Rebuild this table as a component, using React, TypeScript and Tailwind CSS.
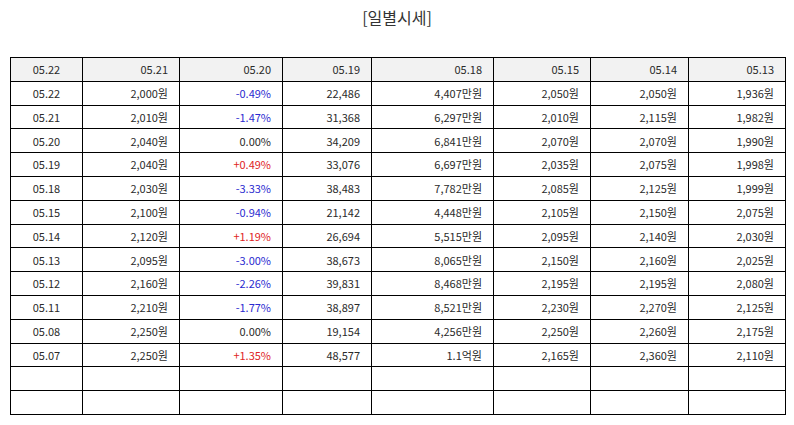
const headers = ["05.22", "05.21", "05.20", "05.19", "05.18", "05.15", "05.14", "05.13"];

type Row = [string, string, string, string, string, string, string, string];

const rows: Row[] = [
  ["05.22", "2,000원", "-0.49%", "22,486", "4,407만원", "2,050원", "2,050원", "1,936원"],
  ["05.21", "2,010원", "-1.47%", "31,368", "6,297만원", "2,010원", "2,115원", "1,982원"],
  ["05.20", "2,040원", "0.00%", "34,209", "6,841만원", "2,070원", "2,070원", "1,990원"],
  ["05.19", "2,040원", "+0.49%", "33,076", "6,697만원", "2,035원", "2,075원", "1,998원"],
  ["05.18", "2,030원", "-3.33%", "38,483", "7,782만원", "2,085원", "2,125원", "1,999원"],
  ["05.15", "2,100원", "-0.94%", "21,142", "4,448만원", "2,105원", "2,150원", "2,075원"],
  ["05.14", "2,120원", "+1.19%", "26,694", "5,515만원", "2,095원", "2,140원", "2,030원"],
  ["05.13", "2,095원", "-3.00%", "38,673", "8,065만원", "2,150원", "2,160원", "2,025원"],
  ["05.12", "2,160원", "-2.26%", "39,831", "8,468만원", "2,195원", "2,195원", "2,080원"],
  ["05.11", "2,210원", "-1.77%", "38,897", "8,521만원", "2,230원", "2,270원", "2,125원"],
  ["05.08", "2,250원", "0.00%", "19,154", "4,256만원", "2,250원", "2,260원", "2,175원"],
  ["05.07", "2,250원", "+1.35%", "48,577", "1.1억원", "2,165원", "2,360원", "2,110원"],
];

const widths = ["w-[72px]", "w-[97px]", "w-[103px]", "w-[89px]", "w-[122px]", "w-[97px]", "w-[98px]", "w-[97px]"];

function rateColor(v: string) {
  if (v.startsWith("-")) return "text-[#2a2ad0]";
  if (v.startsWith("+")) return "text-[#e02424]";
  return "";
}

export default function App() {
  return (
    <div className="w-[794px] h-[425px] bg-white text-[#2a2a2a] font-['Noto_Sans_CJK_KR','Noto_Sans',sans-serif]">
      <h1 className="pt-[5px] h-[57px] text-center text-[16px] leading-[24px] text-[#333]">[일별시세]</h1>
      <table className="ml-[10px] w-[776px] table-fixed border-collapse text-[11px]">
        <colgroup>
          {widths.map((w, i) => (
            <col key={i} className={w} />
          ))}
        </colgroup>
        <thead>
          <tr className="h-[23.8px] bg-[#f2f2f2]">
            {headers.map((h, i) => (
              <th
                key={i}
                className={`border border-black font-normal p-0 px-[11px] ${i === 0 ? "text-center" : "text-right"}`}
              >
                {h}
              </th>
            ))}
          </tr>
        </thead>
        <tbody>
          {rows.map((r, ri) => (
            <tr key={ri} className="h-[23.8px]">
              {r.map((c, i) => (
                <td
                  key={i}
                  className={`border border-black p-0 px-[11px] ${i === 0 ? "text-center" : "text-right"} ${i === 2 ? rateColor(c) : ""}`}
                >
                  {c}
                </td>
              ))}
            </tr>
          ))}
          {[0, 1].map((k) => (
            <tr key={`e${k}`} className="h-[23.8px]">
              {headers.map((_, i) => (
                <td key={i} className="border border-black" />
              ))}
            </tr>
          ))}
        </tbody>
      </table>
    </div>
  );
}
